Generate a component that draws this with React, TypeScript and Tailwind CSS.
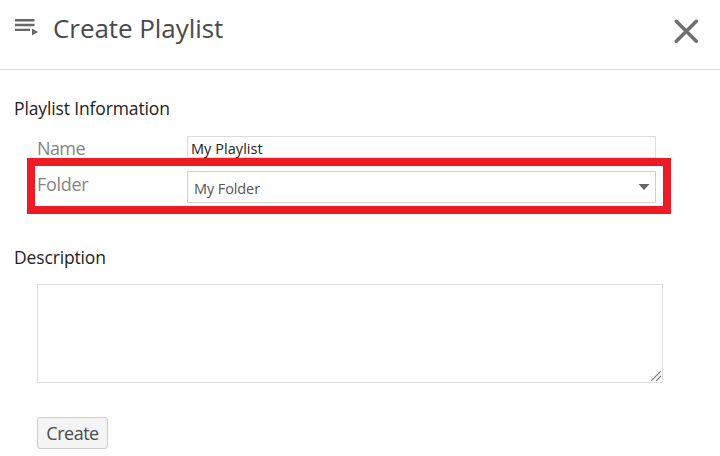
function PlaylistIcon() {
  return (
    <svg width="24" height="18" viewBox="0 0 24 18" fill="#686868">
      <path d="M0 1h19.500v2.400H0zM0 5.800h19.500v2.400H0zM0 10.700h15v2.400H0zM17 10.500l6 3.500-6 3.500z" />
    </svg>
  )
}

function CloseIcon() {
  return (
    <svg width="24" height="24" viewBox="0 0 24 24" fill="none" stroke="#6f6f6f" strokeWidth="3.500" strokeLinecap="round">
      <path d="M2.300 2.300l20 20M22.300 2.300l-20 20" />
    </svg>
  )
}

export default function App() {
  return (
    <div className="h-[456px] w-[720px] overflow-hidden bg-white font-['Open_Sans',sans-serif]">
      <header className="flex h-[70px] justify-between border-b border-[#dcdcdc] pl-[15px] pr-[22px]">
        <div className="flex">
          <div className="pt-[18px]"><PlaylistIcon /></div>
          <h1 className="ml-[14px] mt-[10px] whitespace-nowrap text-[26px] leading-[36px] tracking-[-0.06px] text-[#4a4a4a]">Create Playlist</h1>
        </div>
        <button className="mt-[19px] h-6" aria-label="Close"><CloseIcon /></button>
      </header>

      <main>
        <h2 className="ml-[14px] mt-[26px] h-[40px] text-[17.500px] leading-[25px] tracking-[-0.130px] text-[#222]">Playlist Information</h2>
        <div className="flex h-[22px] pl-[37px]">
          <label className="w-[150px] text-[18px] leading-[25px] tracking-[-0.600px] text-[#858585]">Name</label>
          <div className="w-[469px] border border-[#dedede] pl-[3px] text-[14.500px] leading-[23px] tracking-[0.050px] text-[#222]">My Playlist</div>
        </div>
        <div className="ml-[27px] flex h-[56px] w-[644px] border-8 border-[#ed1c24] pl-[2px] pt-[5px]">
          <label className="w-[150px] text-[18px] leading-[26px] tracking-[-0.300px] text-[#858585]">Folder</label>
          <div className="flex h-[32px] w-[469px] items-center justify-between border border-[#d0d0d0] pl-[6px] pr-[5px]">
            <span className="pt-[3px] text-[14.500px] leading-[20px] tracking-[-0.100px] text-[#555]">My Folder</span>
            <svg width="12" height="6" viewBox="0 0 12 6" fill="#666"><path d="M0.500 0h11L6 6z" /></svg>
          </div>
        </div>

        <h2 className="ml-[14px] mt-[31px] text-[17.500px] leading-[25px] tracking-[-0.150px] text-[#222]">Description</h2>
        <div className="ml-[37px] mt-[14px] flex h-[99px] w-[626px] items-end justify-end border border-[#dedede] p-px">
          <svg width="10" height="10" viewBox="0 0 10 10" stroke="#777" strokeWidth="1.200"><path d="M0 10L10 0M5 10l5-5" /></svg>
        </div>
        <button className="ml-[37px] mt-[34px] block h-[32px] w-[71px] rounded-[3px] border border-[#ccc] bg-[#f4f4f4] text-[18px] leading-[31px] tracking-[-0.500px] text-[#4a4a4a]">Create</button>
      </main>
    </div>
  )
}
